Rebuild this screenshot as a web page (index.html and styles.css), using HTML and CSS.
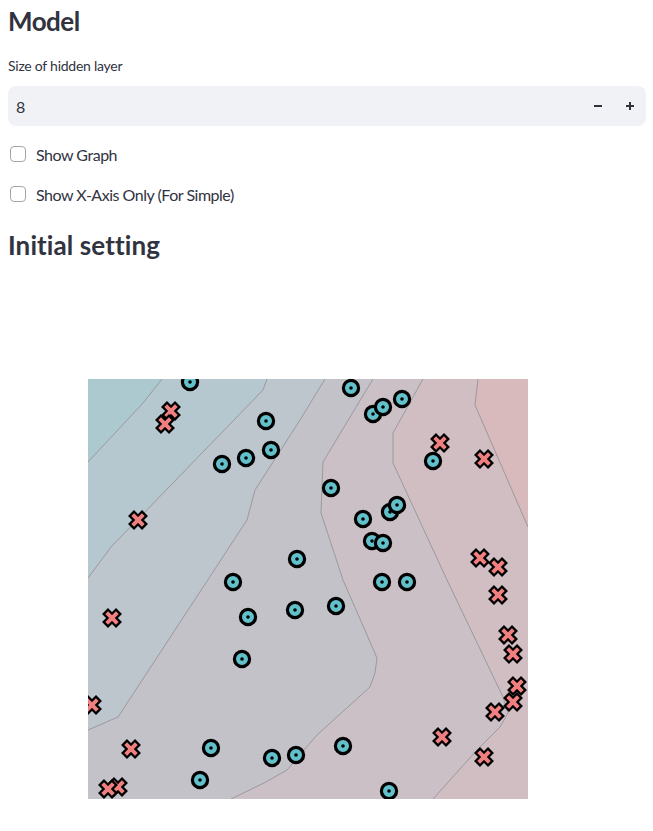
FILE: index.html
```html
<!DOCTYPE html>
<html lang="en">
<head>
<meta charset="utf-8">
<title>Model</title>
<link rel="stylesheet" href="styles.css">
</head>
<body>
<div class="main">
  <h3 class="hd hd-model">Model</h3>
  <div class="field">
    <div class="lbl">Size of hidden layer</div>
    <div class="num">
      <span class="num-val">8</span>
      <div class="steps">
        <span class="step"><svg width="10" height="10" viewBox="0 0 10 10"><rect x="1" y="4" width="8" height="2" fill="#31333f"/></svg></span>
        <span class="step"><svg width="10" height="10" viewBox="0 0 10 10"><rect x="1" y="4" width="8" height="2" fill="#31333f"/><rect x="4" y="1" width="2" height="8" fill="#31333f"/></svg></span>
      </div>
    </div>
  </div>
  <div class="cb"><span class="box"></span><span class="cb-txt">Show Graph</span></div>
  <div class="cb cb-2"><span class="box"></span><span class="cb-txt">Show X-Axis Only (For Simple)</span></div>
  <h3 class="hd hd-init">Initial setting</h3>
  <div class="fig">
    <svg class="plot" width="440" height="420" viewBox="0 0 440 420">
      <defs>
        <g id="mx">
          <path d="M-7 -7L7 7M-7 7L7 -7" stroke="#000" stroke-width="8.4" fill="none"/>
          <path d="M-5.3 -5.3L5.3 5.3M-5.3 5.3L5.3 -5.3" stroke="#f08080" stroke-width="4" fill="none"/>
        </g>
        <g id="mo">
          <circle r="7.6" fill="#62c0ca" stroke="#000" stroke-width="3.2"/>
          <circle r="1.8" fill="#000"/>
        </g>
      </defs>
      <rect class="rg-a" x="0" y="0" width="440" height="420"/>
      <polygon class="rg-b" points="74,0 55,24 0,83 0,420 440,420 440,0"/>
      <polygon class="rg-c" points="179,0 175,11 23,168 0,199 0,420 440,420 440,0"/>
      <polygon class="rg-d" points="237,0 212,41 167,111 159,141 30,338 0,351 0,420 440,420 440,0"/>
      <polygon class="rg-e" points="285,0 235,83 233,134 255,201 289,279 287,294 282,308 229,356 199,391 176,404 143,420 440,420 440,0"/>
      <polygon class="rg-f" points="335,0 305,54 305,84 359,201 415,318 420,334 412,348 389,371 345,420 440,420 440,0"/>
      <polygon class="rg-g" points="390,0 387,26 440,148 440,0"/>
      <g class="cl">
        <polyline points="74,0 55,24 0,83"/>
        <polyline points="179,0 175,11 23,168 0,199"/>
        <polyline points="237,0 212,41 167,111 159,141 30,338 0,351"/>
        <polyline points="285,0 235,83 233,134 255,201 289,279 287,294 282,308 229,356 199,391 176,404 143,420"/>
        <polyline points="335,0 305,54 305,84 359,201 415,318 420,334 412,348 389,371 345,420"/>
        <polyline points="390,0 387,26 440,148"/>
      </g>
      <g class="xs">
        <use href="#mx" x="83" y="32"/>
        <use href="#mx" x="77" y="45"/>
        <use href="#mx" x="50" y="141"/>
        <use href="#mx" x="352" y="64"/>
        <use href="#mx" x="396" y="80"/>
        <use href="#mx" x="392" y="179"/>
        <use href="#mx" x="410" y="188"/>
        <use href="#mx" x="410" y="216"/>
        <use href="#mx" x="24" y="239"/>
        <use href="#mx" x="420" y="256"/>
        <use href="#mx" x="425" y="275"/>
        <use href="#mx" x="429" y="307"/>
        <use href="#mx" x="425" y="323"/>
        <use href="#mx" x="407" y="333"/>
        <use href="#mx" x="4" y="326"/>
        <use href="#mx" x="43" y="370"/>
        <use href="#mx" x="354" y="358"/>
        <use href="#mx" x="396" y="378"/>
        <use href="#mx" x="30" y="408"/>
        <use href="#mx" x="20" y="410"/>
      </g>
      <g class="os">
        <use href="#mo" x="102" y="3"/>
        <use href="#mo" x="263" y="9"/>
        <use href="#mo" x="285" y="35"/>
        <use href="#mo" x="295" y="28"/>
        <use href="#mo" x="314" y="20"/>
        <use href="#mo" x="178" y="42"/>
        <use href="#mo" x="134" y="85"/>
        <use href="#mo" x="158" y="79"/>
        <use href="#mo" x="183" y="71"/>
        <use href="#mo" x="345" y="82"/>
        <use href="#mo" x="243" y="109"/>
        <use href="#mo" x="275" y="140"/>
        <use href="#mo" x="302" y="133"/>
        <use href="#mo" x="309" y="126"/>
        <use href="#mo" x="284" y="162"/>
        <use href="#mo" x="295" y="164"/>
        <use href="#mo" x="209" y="180"/>
        <use href="#mo" x="145" y="203"/>
        <use href="#mo" x="294" y="203"/>
        <use href="#mo" x="319" y="203"/>
        <use href="#mo" x="207" y="231"/>
        <use href="#mo" x="248" y="227"/>
        <use href="#mo" x="160" y="238"/>
        <use href="#mo" x="154" y="280"/>
        <use href="#mo" x="123" y="369"/>
        <use href="#mo" x="184" y="379"/>
        <use href="#mo" x="208" y="376"/>
        <use href="#mo" x="255" y="367"/>
        <use href="#mo" x="112" y="401"/>
        <use href="#mo" x="301" y="412"/>
      </g>
    </svg>
  </div>
</div>
</body>
</html>
```

FILE: styles.css
```css
html, body {
  margin: 0;
  padding: 0;
  background: #ffffff;
}
body {
  font-family: "Lato", "Noto Sans", sans-serif;
  color: #31333f;
}
.main {
  padding: 0 7px 0 8px;
}
.hd {
  margin: 0;
  font-size: 26px;
  line-height: 36px;
  font-weight: 700;
}
.hd-model {
  padding-top: 3px;
  letter-spacing: -0.5px;
}
.hd-init {
  margin-top: 21px;
  letter-spacing: 0.1px;
}
.field {
  margin-top: 17px;
}
.lbl {
  font-size: 14px;
  line-height: 20px;
  letter-spacing: -0.25px;
}
.num {
  margin-top: 10px;
  height: 40px;
  background: #f0f2f6;
  border-radius: 8px;
  display: flex;
  align-items: center;
}
.num-val {
  flex: 1;
  padding-left: 8px;
  font-size: 16px;
}
.steps {
  display: flex;
  height: 100%;
}
.step {
  width: 32px;
  display: flex;
  align-items: center;
  justify-content: center;
}
.step svg {
  display: block;
}
.cb {
  margin-top: 16px;
  height: 24px;
  display: flex;
  align-items: center;
  gap: 10px;
  padding-left: 2px;
}
.cb-2 {
  margin-top: 16px;
}
.box {
  width: 14px;
  height: 14px;
  border: 1px solid #a3a5ad;
  border-radius: 4px;
  background: #fff;
}
.cb-txt {
  font-size: 16px;
  letter-spacing: -0.48px;
}
.fig {
  padding: 116px 0 0 80px;
}
.plot {
  display: block;
}
.rg-a { fill: #abc9cf; }
.rg-b { fill: #b5c7cf; }
.rg-c { fill: #bdc5cd; }
.rg-d { fill: #c4c2c9; }
.rg-e { fill: #cbc0c6; }
.rg-f { fill: #d1bec3; }
.rg-g { fill: #d8b9bc; }
.cl polyline {
  fill: none;
  stroke: #9a9a9e;
  stroke-width: 1;
}
```
